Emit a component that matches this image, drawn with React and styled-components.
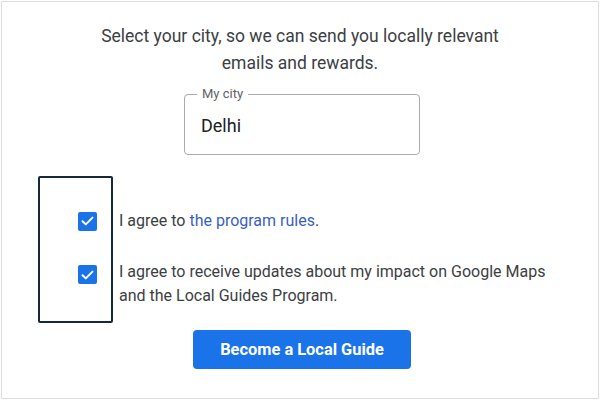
import React from 'react';
import styled, { createGlobalStyle } from 'styled-components';

const GlobalStyle = createGlobalStyle`
  html, body {
    margin: 0;
    padding: 0;
    background: #ffffff;
  }
  body {
    font-family: Roboto, "Liberation Sans", Arial, sans-serif;
    color: #3c4043;
  }
`;

// outer card with the faint grey edge
const Frame = styled.main`
  box-sizing: border-box;
  width: 598px;
  height: 398px;
  margin: 1px;
  border: 1px solid #dedede;
  display: flex;
  flex-direction: column;
  align-items: center;
  padding-top: 21px;
`;

const Intro = styled.p`
  margin: 0;
  width: 440px;
  font-size: 17.5px;
  line-height: 27px;
  text-align: center;
  color: #3c4043;
`;

const Field = styled.div`
  position: relative;
  box-sizing: border-box;
  width: 236px;
  height: 61px;
  margin: 17px 0 0 4px;
  padding: 0 16px;
  border: 1px solid #a8abaf;
  border-radius: 4px;
  display: flex;
  align-items: center;
`;

// floating label that sits on the top border
const FieldLabel = styled.span`
  position: absolute;
  left: 12px;
  top: -9px;
  padding: 0 5px;
  background: #ffffff;
  font-size: 13px;
  line-height: 16px;
  color: #5f6368;
`;

const CityValue = styled.span`
  font-size: 18px;
  color: #202124;
  margin-top: 2px;
`;

const Agreements = styled.section`
  position: relative;
  align-self: flex-start;
  margin: 54px 0 0 76px;
  display: flex;
  flex-direction: column;
  gap: 27px;
`;

// dark outline drawn over the checkbox column
const Highlight = styled.div`
  position: absolute;
  left: -40px;
  top: -33px;
  width: 75px;
  height: 147px;
  box-sizing: border-box;
  border: 2px solid #14293a;
  border-radius: 2px;
  pointer-events: none;
`;

const Row = styled.label`
  display: grid;
  grid-template-columns: 19px 430px;
  column-gap: 22px;
  align-items: ${(p) => (p.$top ? 'start' : 'center')};
`;

const Box = styled.span`
  width: 19px;
  height: 19px;
  border-radius: 2px;
  background: #1a73e8;
  display: flex;
  align-items: center;
  justify-content: center;
  margin-top: ${(p) => (p.$top ? '5px' : '0')};
`;

const Text = styled.span`
  font-size: 16px;
  line-height: 24px;
  color: #3c4043;
`;

const Link = styled.a`
  color: #3b5fc0;
  text-decoration: none;
`;

const Button = styled.button`
  margin: 22px 0 0 4px;
  width: 218px;
  height: 39px;
  border: none;
  border-radius: 4px;
  background: #1a73e8;
  color: #ffffff;
  font-family: Roboto, "Liberation Sans", Arial, sans-serif;
  font-size: 16.4px;
  font-weight: 700;
  cursor: pointer;
`;

const Check = () => (
  <svg width="13" height="10" viewBox="0 0 13 10" fill="none">
    <path d="M1.5 5.2 L4.8 8.4 L11.5 1.6" stroke="#ffffff" strokeWidth="2" strokeLinecap="round" strokeLinejoin="round" />
  </svg>
);

export default function App() {
  return (
    <>
      <GlobalStyle />
      <Frame>
        <Intro>Select your city, so we can send you locally relevant emails and rewards.</Intro>
        <Field>
          <FieldLabel>My city</FieldLabel>
          <CityValue>Delhi</CityValue>
        </Field>
        <Agreements>
          <Highlight />
          <Row>
            <Box><Check /></Box>
            <Text>
              I agree to <Link href="#">the program rules</Link>.
            </Text>
          </Row>
          <Row $top>
            <Box $top><Check /></Box>
            <Text>I agree to receive updates about my impact on Google Maps and the Local Guides Program.</Text>
          </Row>
        </Agreements>
        <Button>Become a Local Guide</Button>
      </Frame>
    </>
  );
}
